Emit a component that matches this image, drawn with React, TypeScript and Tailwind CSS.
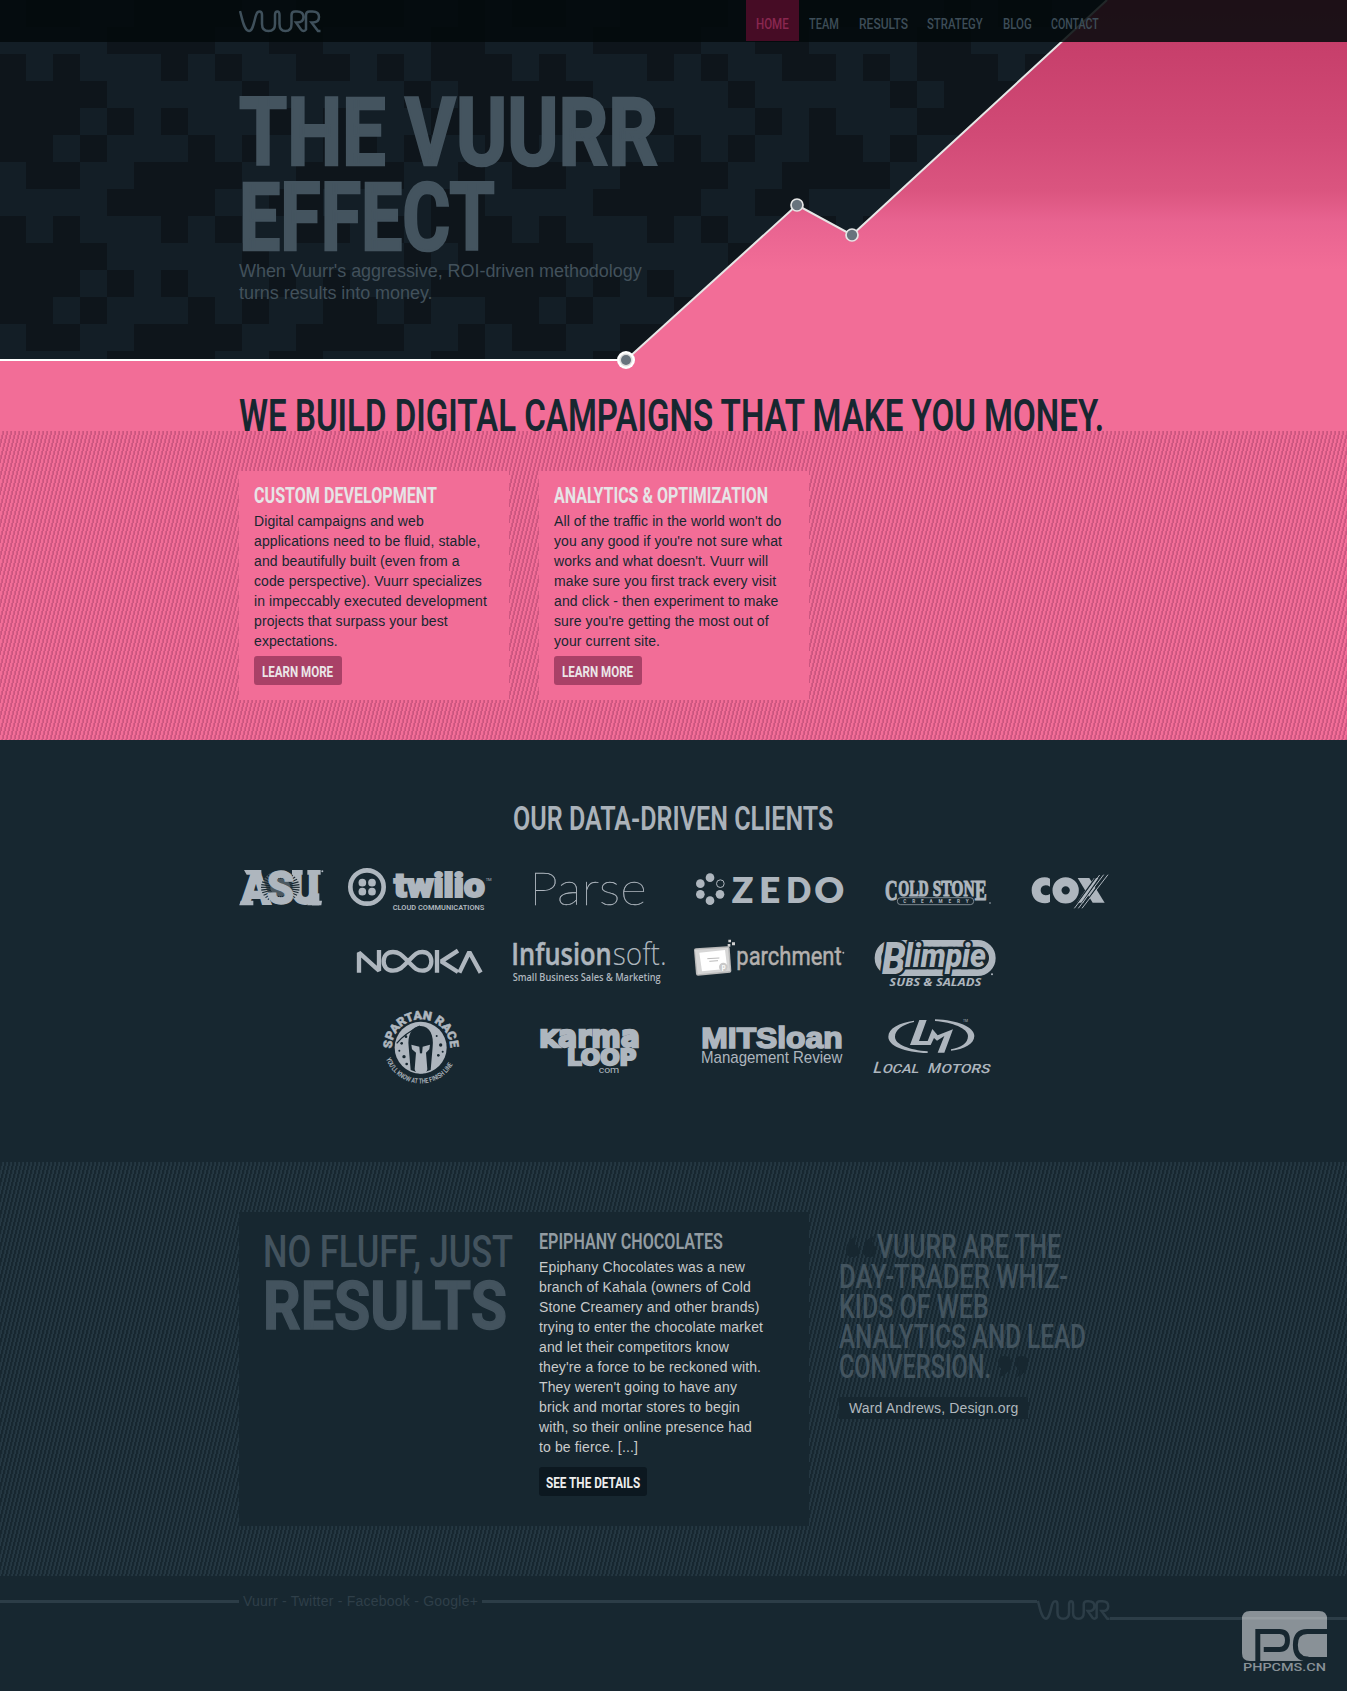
import { useLayoutEffect, useRef, useState } from 'react';
import type { ReactNode } from 'react';

const LIGHT = '#aeb6be';
const NIGHT = '#172730';

/* Text condensed horizontally so that it fills exactly the given width. */
function Fit({ w, className = '', children }: { w: number; className?: string; children: ReactNode }) {
  const ref = useRef<HTMLSpanElement>(null);
  const [scale, setScale] = useState(1);
  useLayoutEffect(() => {
    if (ref.current) setScale(w / ref.current.offsetWidth);
  }, [w]);
  return (
    <span className="block" style={{ width: w }}>
      <span
        ref={ref}
        className={`inline-block origin-left align-top whitespace-nowrap ${className}`}
        style={{ transform: `scaleX(${scale})` }}
      >
        {children}
      </span>
    </span>
  );
}

/* Fine leaning hatch that fills its parent. */
function Hatch({ id, color }: { id: string; color: string }) {
  return (
    <svg className="absolute inset-0 h-full w-full" aria-hidden="true">
      <defs>
        <pattern id={id} width="4" height="16" patternUnits="userSpaceOnUse" shapeRendering="crispEdges">
          <rect x="3" y="0" width="1" height="4" fill={color} />
          <rect x="2" y="0" width="1" height="4" fill={color} opacity="0.75" />
          <rect x="2" y="4" width="1" height="4" fill={color} />
          <rect x="1" y="4" width="1" height="4" fill={color} opacity="0.75" />
          <rect x="1" y="8" width="1" height="4" fill={color} />
          <rect x="0" y="8" width="1" height="4" fill={color} opacity="0.75" />
          <rect x="0" y="12" width="1" height="4" fill={color} />
          <rect x="3" y="12" width="1" height="4" fill={color} opacity="0.75" />
        </pattern>
      </defs>
      <rect width="100%" height="100%" fill={`url(#${id})`} />
    </svg>
  );
}

const MOSAIC = [
  'LLLLDDDDLLDDLLLLDD',
  'DLDLLLDLDLLDDLDLDD',
  'DDDDLLLLLDLLLLLDLD',
  'DDDLDLDLLLDLDLLLDD',
  'DDLDLLLDLDLLDDLDLL',
  'LDDLLDDDDLLDDDDLLD',
];

function HeroArt() {
  return (
    <svg className="absolute inset-0" width="1347" height="431" viewBox="0 0 1347 431" aria-hidden="true">
      <defs>
        <pattern id="mosaic" width="486" height="162" patternUnits="userSpaceOnUse" patternTransform="translate(-1 27)">
          <rect width="486" height="162" fill="#0e151b" />
          {MOSAIC.map((row, r) =>
            row.split('').map((c, i) =>
              c === 'L' ? (
                <rect key={`${r}-${i}`} x={i * 27} y={r * 27} width="27" height="27" fill="#131e26" shapeRendering="crispEdges" />
              ) : null,
            ),
          )}
        </pattern>
        <linearGradient id="rise" x1="0" y1="0" x2="0" y2="270" gradientUnits="userSpaceOnUse">
          <stop offset="0" stopColor="#c43b68" />
          <stop offset="0.17" stopColor="#c73f6b" />
          <stop offset="0.5" stopColor="#d14a76" />
          <stop offset="0.71" stopColor="#db5580" />
          <stop offset="0.82" stopColor="#e86390" />
          <stop offset="1" stopColor="#f26d97" />
        </linearGradient>
      </defs>
      <rect width="1347" height="360" fill="url(#mosaic)" />
      <path d="M0 360H626L797 205L852 235L1107 0H1347V431H0Z" fill="url(#rise)" />
      <path d="M626 360L797 205L852 235L1107 0" fill="none" stroke="#e6e6e6" strokeWidth="2" />
      <path d="M0 360H626" stroke="#fff" strokeWidth="2" />
      <circle cx="626" cy="360" r="9" fill="#fff" />
      <circle cx="626" cy="360" r="6.500" fill="#ddd" />
      <circle cx="626" cy="360" r="5" fill="#68737d" />
      <circle cx="797" cy="205" r="6" fill="#68737d" stroke="#e6e6e6" strokeWidth="1.700" />
      <circle cx="852" cy="235" r="6" fill="#68737d" stroke="#e6e6e6" strokeWidth="1.700" />
    </svg>
  );
}

const WORDMARK =
  'M1 1C3 8 5 21 10 21C14.500 21 15.500 8 17.500 4Q18.500 1.500 20.500 1.500Q23 1.500 23 5V14Q23 21 29.500 21Q36 21 36 14V5Q36 1.500 38.300 1.500Q40.500 1.500 40.500 5V14Q40.500 21 46.500 21Q52.500 21 52.500 14V5Q52.500 1.500 56 1.500H58Q64.500 1.500 64.500 7Q64.500 12.500 58 12.500H57L62 19.500Q64.500 22.500 67 19.500V5Q67 1.500 70.500 1.500H73.500Q80 1.500 80 7Q80 12.500 73.500 12.500H72.500L79 21H81.500';

const NAV = [
  { label: 'HOME', w: 33, box: 'bg-[#460c25] text-[#8a2750] pl-[10px] w-[53px]' },
  { label: 'TEAM', w: 30, box: 'pl-[10px] w-[50px]' },
  { label: 'RESULTS', w: 49, box: 'pl-[10px] w-[68px]' },
  { label: 'STRATEGY', w: 56, box: 'pl-[10px] w-[76px]' },
  { label: 'BLOG', w: 29, box: 'pl-[10px] w-[48px]' },
  { label: 'CONTACT', w: 48, box: 'pl-[10px] w-[68px]' },
];

function Card({ title, w, lines }: { title: string; w: number; lines: string[] }) {
  return (
    <div className="h-[229px] w-[270px] bg-[#f26d97] px-[15px] pt-3">
      <h3 className="text-[22.500px] leading-6 font-bold text-[#e6e4e6]">
        <Fit w={w}>{title}</Fit>
      </h3>
      <p className="mt-1 font-['Liberation_Sans',sans-serif] text-[14px] leading-5 tracking-[0.1px] whitespace-nowrap text-[#172730]">
        {lines.map((l) => (
          <span key={l} className="block">
            {l}
          </span>
        ))}
      </p>
      <a className="mt-[5px] block h-[29px] w-[88px] rounded-[3px] bg-[#a94167] pl-2 text-[15.500px] leading-[33px] font-bold text-[#ebe6e8]">
        <Fit w={71}>LEARN MORE</Fit>
      </a>
    </div>
  );
}

type TProps = {
  x: number;
  y: number;
  s: number;
  w?: number;
  font?: string;
  weight?: number;
  italic?: boolean;
  fill?: string;
  children: string;
};
function T({ x, y, s, w, font = 'Roboto', weight = 400, italic, fill = LIGHT, children }: TProps) {
  return (
    <text
      x={x}
      y={y}
      fontSize={s}
      fontFamily={`${font}, sans-serif`}
      fontWeight={weight}
      fontStyle={italic ? 'italic' : undefined}
      fill={fill}
      textLength={w}
      lengthAdjust={w ? 'spacingAndGlyphs' : undefined}
    >
      {children}
    </text>
  );
}

/* Client logos are drawn on a grid three times finer than the page. */
function Logo({ box, className = '', children }: { box: [number, number, number, number]; className?: string; children: ReactNode }) {
  return (
    <svg
      className={`shrink-0 overflow-visible ${className}`}
      width={box[2] / 3}
      height={box[3] / 3}
      viewBox={box.join(' ')}
      fill={LIGHT}
    >
      {children}
    </svg>
  );
}

function Asu() {
  const rays = Array.from({ length: 36 }, (_, i) => (i * Math.PI) / 18);
  return (
    <Logo box={[54, 255, 261, 144]}>
      <g stroke={LIGHT} strokeWidth="6">
        <T x={64} y={373} s={138} w={88} weight={900}>A</T>
        <T x={214} y={373} s={138} w={84} weight={900}>U</T>
      </g>
      <path d="M58 376L62 362H100V376ZM72 270H124V284H80ZM216 270H248V284H216ZM262 270H302V284H262ZM270 362H306L304 376H262Z" />
      <path d="M276 340H298V376H276Z" />
      <ellipse cx="181" cy="322" rx="56" ry="50" fill={LIGHT} opacity="0.35" />
      <g stroke={NIGHT} strokeWidth="3.500">
        {rays.map((a) => (
          <path key={a} d={`M${181 + 30 * Math.cos(a)} ${322 + 26 * Math.sin(a)}L${181 + 58 * Math.cos(a)} ${322 + 48 * Math.sin(a)}`} />
        ))}
      </g>
      <g stroke={LIGHT} strokeWidth="4">
        <T x={140} y={372} s={138} w={82} weight={900}>S</T>
      </g>
      <circle cx="307" cy="274" r="3" />
    </Logo>
  );
}

function Twilio() {
  return (
    <Logo box={[381, 255, 438, 144]} className="ml-[22px]">
      <circle cx="441" cy="321" r="50" fill="none" stroke={LIGHT} strokeWidth="14" />
      <circle cx="427" cy="308" r="11.500" />
      <circle cx="456" cy="308" r="11.500" />
      <circle cx="427" cy="335" r="11.500" />
      <circle cx="456" cy="335" r="11.500" />
      <g stroke={LIGHT} strokeWidth="6">
        <T x={522} y={351} s={98} w={272} weight={900}>twilio</T>
      </g>
      <T x={518} y={391} s={22} w={275} weight={600}>CLOUD COMMUNICATIONS</T>
      <T x={797} y={304} s={12} w={18}>TM</T>
    </Logo>
  );
}

function Zedo() {
  return (
    <Logo box={[72, 255, 453, 144]} className="ml-[47px]">
      <circle cx="120" cy="293" r="13" />
      <circle cx="91" cy="311" r="13" />
      <circle cx="91" cy="343" r="13" />
      <circle cx="120" cy="362" r="13" />
      <circle cx="150" cy="343" r="13" />
      <circle cx="151" cy="311" r="11.500" fill="none" stroke={LIGHT} strokeWidth="3" />
      <T x={185} y={368} s={107} w={65} font="Lato" weight={800}>Z</T>
      <T x={267} y={368} s={107} w={64} font="Lato" weight={800}>E</T>
      <T x={348} y={368} s={107} w={76} font="Lato" weight={800}>D</T>
      <T x={433} y={368} s={107} w={90} font="Lato" weight={800}>O</T>
    </Logo>
  );
}

function ColdStone() {
  const serif = 'Liberation Serif';
  return (
    <Logo box={[639, 255, 327, 144]} className="ml-[38px]">
      <g stroke={LIGHT} strokeWidth="3.500">
        <T x={645} y={360} s={86} w={38} font={serif} weight={700}>C</T>
        <T x={685} y={348} s={68} w={91} font={serif} weight={700}>OLD</T>
        <T x={788} y={348} s={68} w={126} font={serif} weight={700}>STON</T>
        <T x={914} y={360} s={86} w={36} font={serif} weight={700}>E</T>
      </g>
      <rect x="682" y="353" width="229" height="21" rx="10" fill={NIGHT} stroke={LIGHT} strokeWidth="2" />
      <text x="700" y="368" fontSize="14" fontFamily="Roboto, sans-serif" fontWeight="700" textLength="196">
        CREAMERY
      </text>
      <circle cx="960" cy="369" r="2.500" />
    </Logo>
  );
}

function Cox() {
  return (
    <Logo box={[1083, 255, 237, 144]} className="ml-[39px]">
      <path d="M1140 296Q1133 292 1124 292C1100 292 1085 309 1085 331C1085 354 1101 370 1125 370Q1133 370 1140 366V342Q1134 346 1127 346Q1112 345 1112 331Q1112 317 1127 316Q1134 316 1140 320Z" />
      <circle cx="1187" cy="331" r="26" fill="none" stroke={LIGHT} strokeWidth="27" />
      <path d="M1223 294H1258L1304 368H1268Z" />
      <path d="M1220 368L1272 294H1286L1240 368Z" />
      <path d="M1208 388L1284 283M1224 386L1296 283M1234 386L1308 283" stroke={NIGHT} strokeWidth="4" />
      <path d="M1213 385L1289 285M1225 385L1301 284M1236 385L1314 284" stroke={LIGHT} strokeWidth="3" />
    </Logo>
  );
}

function Nooka() {
  return (
    <Logo box={[408, 474, 384, 153]} className="ml-[118px]">
      <g fill="none" stroke={LIGHT} strokeWidth="13">
        <path d="M417 578V518L477 572V510" strokeLinejoin="bevel" />
        <path d="M564 544C546 562 538 572 519 572C501 572 491 560 491 544C491 528 501 516 519 516C538 516 546 526 564 544C582 562 588 572 607 572C624 572 634 560 634 544C634 528 624 516 607 516C588 516 582 526 564 544Z" />
        <path d="M651 510V578M714 512L664 544L714 576M718 578L748 516L782 578" strokeLinejoin="bevel" />
      </g>
    </Logo>
  );
}

function Infusionsoft() {
  return (
    <Logo box={[873, 474, 468, 153]} className="ml-[27px]">
      <g stroke={LIGHT} strokeWidth="1.500">
        <T x={874} y={556} s={92} w={301} font="Open Sans" weight={600}>Infusion</T>
      </g>
      <T x={1178} y={556} s={92} w={162} font="Open Sans" weight={300}>soft.</T>
      <T x={878} y={604} s={31} w={444} font="Open Sans" weight={600}>Small Business Sales &amp; Marketing</T>
    </Logo>
  );
}

function Parchment() {
  return (
    <Logo box={[69, 474, 459, 153]} className="ml-[26px]">
      <path d="M72 510Q72 506 78 505L172 499Q178 499 179 504L184 572Q184 577 180 578L84 587Q79 587 78 582Z" fill="#b9b9b9" />
      <path d="M75 509L174 503L180 573L83 583Z" fill="#d6d6d6" />
      <path d="M88 518L165 510L172 566L96 574Z" fill="#fff" />
      <path d="M112 536L148 534M118 544L144 542" stroke="#bbb" strokeWidth="3" />
      <circle cx="160" cy="561" r="13" fill="#c8c8c8" />
      <T x={155} y={568} s={20} weight={700} fill="#fff">p</T>
      <path d="M175 479h8v8h-8zM186 487h9v9h-9zM173 492h8v8h-8z" fill="#d0d0d0" />
      <g stroke="#b3b0ae" strokeWidth="1.500">
        <T x={199} y={554} s={80} w={316} weight={400} fill="#b3b0ae">parchment</T>
      </g>
      <circle cx="520" cy="518" r="3" fill="#b3b0ae" />
    </Logo>
  );
}

function Blimpie() {
  return (
    <Logo box={[612, 474, 369, 153]} className="ml-7">
      <rect x="624" y="490" width="343" height="88" rx="44" fill="none" stroke={LIGHT} strokeWidth="20" />
      <rect x="690" y="504" width="220" height="60" fill={NIGHT} />
      <g stroke={NIGHT} strokeWidth="16" strokeLinejoin="round" paintOrder="stroke">
        <T x={636} y={582} s={130} w={72} weight={900} italic>B</T>
      </g>
      <g stroke={NIGHT} strokeWidth="14" strokeLinejoin="round" paintOrder="stroke">
        <T x={704} y={560} s={98} w={244} weight={900} italic>limpie</T>
      </g>
      <T x={658} y={619} s={34} w={276} font="Open Sans" weight={700} italic>SUBS &amp; SALADS</T>
      <circle cx="966" cy="583" r="3" />
    </Logo>
  );
}

function Spartan() {
  return (
    <Logo box={[483, 684, 240, 234]} className="ml-[143px]">
      <defs>
        <path id="arcTop" d="M515 806A88 88 0 0 1 691 806" />
        <path id="arcBottom" d="M498 836A110 110 0 0 0 708 830" />
      </defs>
      <text
        fontSize="36"
        fontFamily="Roboto, sans-serif"
        fontWeight="900"
        stroke={LIGHT}
        strokeWidth="1.500"
        textLength="274"
        lengthAdjust="spacingAndGlyphs"
      >
        <textPath href="#arcTop">SPARTAN RACE</textPath>
      </text>
      <text fontSize="21" fontFamily="Roboto, sans-serif" fontWeight="600">
        <textPath href="#arcBottom" textLength="254" lengthAdjust="spacingAndGlyphs">
          YOU'LL KNOW AT THE FINISH LINE
        </textPath>
      </text>
      <circle cx="602" cy="803" r="78" />
      <path d="M530 790Q555 760 600 738" stroke={NIGHT} strokeWidth="4" fill="none" />
      <path d="M602 738C574 738 562 768 566 800L572 870Q600 884 632 870L638 800C642 768 630 738 602 738Z" fill={NIGHT} />
      <path d="M574 794L598 800L600 822V880Q586 880 584 868L588 818L576 808ZM630 794L608 800L606 822V880Q620 880 622 868L618 818L628 808Z" />
      <path d="M598 820H608V880H598Z" />
      <g fill={NIGHT}>
        <circle cx="545" cy="790" r="4" />
        <circle cx="538" cy="812" r="3" />
        <circle cx="552" cy="830" r="5" />
        <circle cx="558" cy="770" r="4" />
        <circle cx="662" cy="795" r="5" />
        <circle cx="655" cy="826" r="4" />
        <circle cx="668" cy="815" r="3" />
        <circle cx="650" cy="768" r="3" />
        <circle cx="560" cy="852" r="4" />
      </g>
    </Logo>
  );
}

function Karmaloop() {
  return (
    <Logo box={[954, 684, 312, 234]} className="ml-[77px]">
      <g stroke={LIGHT} strokeWidth="7">
        <T x={958} y={800} s={70} w={58} font="DejaVu Sans" weight={700}>K</T>
        <T x={1014} y={800} s={92} w={246} font="DejaVu Sans" weight={700}>arma</T>
        <T x={1041} y={854} s={66} w={208} font="DejaVu Sans" weight={700}>LOOP</T>
      </g>
      <T x={1136} y={879} s={29} w={62}>com</T>
    </Logo>
  );
}

function MitSloan() {
  return (
    <Logo box={[90, 684, 429, 234]} className="ml-[58px]">
      <g stroke={LIGHT} strokeWidth="5">
        <T x={94} y={805} s={88} w={424} font="Liberation Sans" weight={700}>MITSloan</T>
      </g>
      <T x={93} y={849} s={49} w={424} font="Liberation Sans">Management Review</T>
    </Logo>
  );
}

function LocalMotors() {
  return (
    <Logo box={[606, 684, 363, 234]} className="ml-[28px]">
      <path d="M735 722C690 728 658 745 658 770C658 797 705 817 776 819V814C722 809 678 794 678 770C678 750 700 734 735 726Z" />
      <path d="M798 718C866 720 916 742 916 768C916 792 885 808 846 812V808C876 802 897 790 897 768C897 745 850 727 798 723Z" />
      <path d="M751 720H773L750 783H776L790 747L806 766L852 748L826 818H806L826 768L804 782L795 774L785 795H723Z" />
      <g transform="translate(610 878) skewX(-16)">
        <T x={0} y={0} s={48} w={26} weight={500}>L</T>
        <T x={28} y={0} s={38} w={110} weight={500}>OCAL</T>
        <T x={164} y={0} s={42} w={38} weight={500}>M</T>
        <T x={204} y={0} s={38} w={147} weight={500}>OTORS</T>
      </g>
      <T x={882} y={726} s={10}>TM</T>
    </Logo>
  );
}

function QuoteMark({ close = false }: { close?: boolean }) {
  return (
    <svg width="30" height="21" viewBox="0 0 30 21" fill={NIGHT} className={close ? 'rotate-180' : ''}>
      <path d="M11 0C5 2 0 7 0 15Q0 21 6.500 21Q13 21 13 15Q13 9.500 9 8.500Q9 4 11 0ZM28 0C22 2 17 7 17 15Q17 21 23.500 21Q30 21 30 15Q30 9.500 26 8.500Q26 4 28 0Z" />
    </svg>
  );
}

export default function App() {
  return (
    <div className="relative h-[1691px] w-[1347px] overflow-hidden bg-[#172730] font-['Roboto',sans-serif]">
      <section className="relative z-10 h-[431px] bg-[#f26d97]">
        <HeroArt />
        <header className="relative flex h-[42px] bg-[#030a0b]/87 pl-[239px]">
          <svg className="mt-[10px] w-[83px]" height="23" viewBox="0 0 83 23" fill="none" stroke="#3f505b" strokeWidth="2.500">
            <path d={WORDMARK} />
          </svg>
          <nav className="ml-[424px] flex text-[15px] leading-[49px] font-medium text-[#3d4d58]">
            {NAV.map((n) => (
              <a key={n.label} className={`block h-[41px] ${n.box}`}>
                <Fit w={n.w}>{n.label}</Fit>
              </a>
            ))}
          </nav>
        </header>
        <div className="relative pl-[239px]">
          <h1 className="pt-[48px] text-[95px] leading-[85px] font-bold text-[#44545f] [-webkit-text-stroke:2.500px_#44545f]">
            <Fit w={419}>THE VUURR</Fit>
            <Fit w={256}>EFFECT</Fit>
          </h1>
          <p className="font-['Liberation_Sans',sans-serif] text-[18px] leading-[22px] tracking-[-0.05px] text-[#42515b]">
            When Vuurr's aggressive, ROI-driven methodology
            <br />
            turns results into money.
          </p>
          <h2 className="mt-[89px] text-[43.500px] leading-[48px] font-semibold text-[#172730]">
            <Fit w={865}>WE BUILD DIGITAL CAMPAIGNS THAT MAKE YOU MONEY.</Fit>
          </h2>
        </div>
      </section>

      <section className="relative h-[309px] bg-[#f26d97]">
        <Hatch id="hatchPink" color="#ca557f" />
        <div className="relative flex gap-[30px] pt-10 pl-[239px]">
          <Card
            title="CUSTOM DEVELOPMENT"
            w={183}
            lines={[
              'Digital campaigns and web',
              'applications need to be fluid, stable,',
              'and beautifully built (even from a',
              'code perspective). Vuurr specializes',
              'in impeccably executed development',
              'projects that surpass your best',
              'expectations.',
            ]}
          />
          <Card
            title="ANALYTICS & OPTIMIZATION"
            w={214}
            lines={[
              "All of the traffic in the world won't do",
              "you any good if you're not sure what",
              "works and what doesn't. Vuurr will",
              'make sure you first track every visit',
              'and click - then experiment to make',
              "sure you're getting the most out of",
              'your current site.',
            ]}
          />
        </div>
      </section>

      <section className="flex h-[422px] flex-col pt-[58px] pl-[238px]">
        <h2 className="ml-[275px] text-[34px] leading-10 font-semibold text-[#aab2ba]">
          <Fit w={320}>OUR DATA-DRIVEN CLIENTS</Fit>
        </h2>
        <div className="mt-[27px] flex">
          <Asu />
          <Twilio />
          <Logo box={[936, 255, 345, 144]} className="ml-[39px]">
            <g stroke={LIGHT} strokeWidth="1">
              <T x={928} y={376} s={138} w={352} font="Lato" weight={100}>Parse</T>
            </g>
          </Logo>
          <Zedo />
          <ColdStone />
          <Cox />
        </div>
        <div className="mt-[25px] flex">
          <Nooka />
          <Infusionsoft />
          <Parchment />
          <Blimpie />
        </div>
        <div className="mt-[19px] flex">
          <Spartan />
          <Karmaloop />
          <MitSloan />
          <LocalMotors />
        </div>
      </section>

      <section className="relative h-[414px]">
        <Hatch id="hatchDark" color="#253843" />
        <div className="relative flex pt-[50px] pl-[239px]">
          <div className="flex h-[314px] w-[570px] bg-[#172730] pl-[24px]">
            <h2 className="w-[276px] pt-[16px] text-[#43535e]">
              <Fit w={250} className="text-[45px] leading-[48px] font-medium">NO FLUFF, JUST</Fit>
              <Fit w={244} className="text-[66px] leading-[62px] font-bold [-webkit-text-stroke:1.500px_#43535e]">RESULTS</Fit>
            </h2>
            <div className="pt-[17px]">
              <h3 className="text-[22.500px] leading-6 font-semibold text-[#929ca2]">
                <Fit w={184}>EPIPHANY CHOCOLATES</Fit>
              </h3>
              <p className="mt-1 font-['Liberation_Sans',sans-serif] text-[14px] leading-5 tracking-[0.13px] whitespace-nowrap text-[#c9cbcb]">
                Epiphany Chocolates was a new
                <br />
                branch of Kahala (owners of Cold
                <br />
                Stone Creamery and other brands)
                <br />
                trying to enter the chocolate market
                <br />
                and let their competitors know
                <br />
                they're a force to be reckoned with.
                <br />
                They weren't going to have any
                <br />
                brick and mortar stores to begin
                <br />
                with, so their online presence had
                <br />
                to be fierce. [...]
              </p>
              <a className="mt-[10px] block h-[29px] w-[108px] rounded-[3px] bg-[#0c1820] pl-[7px] text-[15.500px] leading-[33px] font-bold text-[#eeeeee]">
                <Fit w={94}>SEE THE DETAILS</Fit>
              </a>
            </div>
          </div>
          <blockquote className="ml-[30px] pt-[20px] text-[33px] leading-[30px] font-medium text-[#43545f]">
            <div className="flex">
              <span className="mt-[4px] mr-[1px] ml-[7px]">
                <QuoteMark />
              </span>
              <Fit w={184}>VUURR ARE THE</Fit>
            </div>
            <Fit w={229}>DAY-TRADER WHIZ-</Fit>
            <Fit w={150}>KIDS OF WEB</Fit>
            <Fit w={247}>ANALYTICS AND LEAD</Fit>
            <div className="flex">
              <Fit w={152}>CONVERSION.</Fit>
              <span className="mt-[4px] ml-[7px]">
                <QuoteMark close />
              </span>
            </div>
            <cite className="mt-[15px] block h-[22px] w-[189px] bg-[#172730] pl-[10px] font-['Liberation_Sans',sans-serif] text-[14px] leading-[22px] font-normal tracking-[0.14px] whitespace-nowrap text-[#b0b8be] not-italic">
              Ward Andrews, Design.org
            </cite>
          </blockquote>
        </div>
      </section>

      <footer className="flex h-[115px] items-start">
        <div className="mt-[24px] h-[3px] w-[239px] bg-[#2c3d47]" />
        <p className="mt-[15px] w-[243px] pl-[4px] font-['Liberation_Sans',sans-serif] text-[14px] leading-5 tracking-[0.23px] whitespace-nowrap text-[#2f3f49]">
          Vuurr - Twitter - Facebook - Google+
        </p>
        <div className="mt-[24px] h-[3px] w-[555px] bg-[#2c3d47]" />
        <svg className="mt-[24px]" width="73" height="20" viewBox="0 0 82 22.500" preserveAspectRatio="none" fill="none" stroke="#2c3d47" strokeWidth="2.800">
          <path d={WORDMARK} />
        </svg>
        <div className="mt-[41px] h-[3px] w-[237px] bg-[#2c3d47]" />
      </footer>

      <svg className="absolute right-[20px] bottom-[17px]" width="85" height="63" viewBox="0 0 86 63" preserveAspectRatio="none">
        <path d="M8 0H78Q86 0 86 8V50H8Q0 50 0 42V8Q0 0 8 0Z" fill="#899197" />
        <path d="M0 6H86V8.500H0Z" fill="#949ca1" />
        <g fill="none" stroke={NIGHT} strokeWidth="5">
          <path d="M16 51V20.500H38Q46 20.500 46 29Q46 38.500 38 38.500H22" />
          <path d="M86 20.500H66Q54 20.500 54 34Q54 47.500 66 48L70 51" />
        </g>
        <path d="M62 46H86V51H62Z" fill={NIGHT} />
        <T x={1} y={60} s={11.500} w={84} weight={500} fill="#899197">PHPCMS.CN</T>
      </svg>
    </div>
  );
}
